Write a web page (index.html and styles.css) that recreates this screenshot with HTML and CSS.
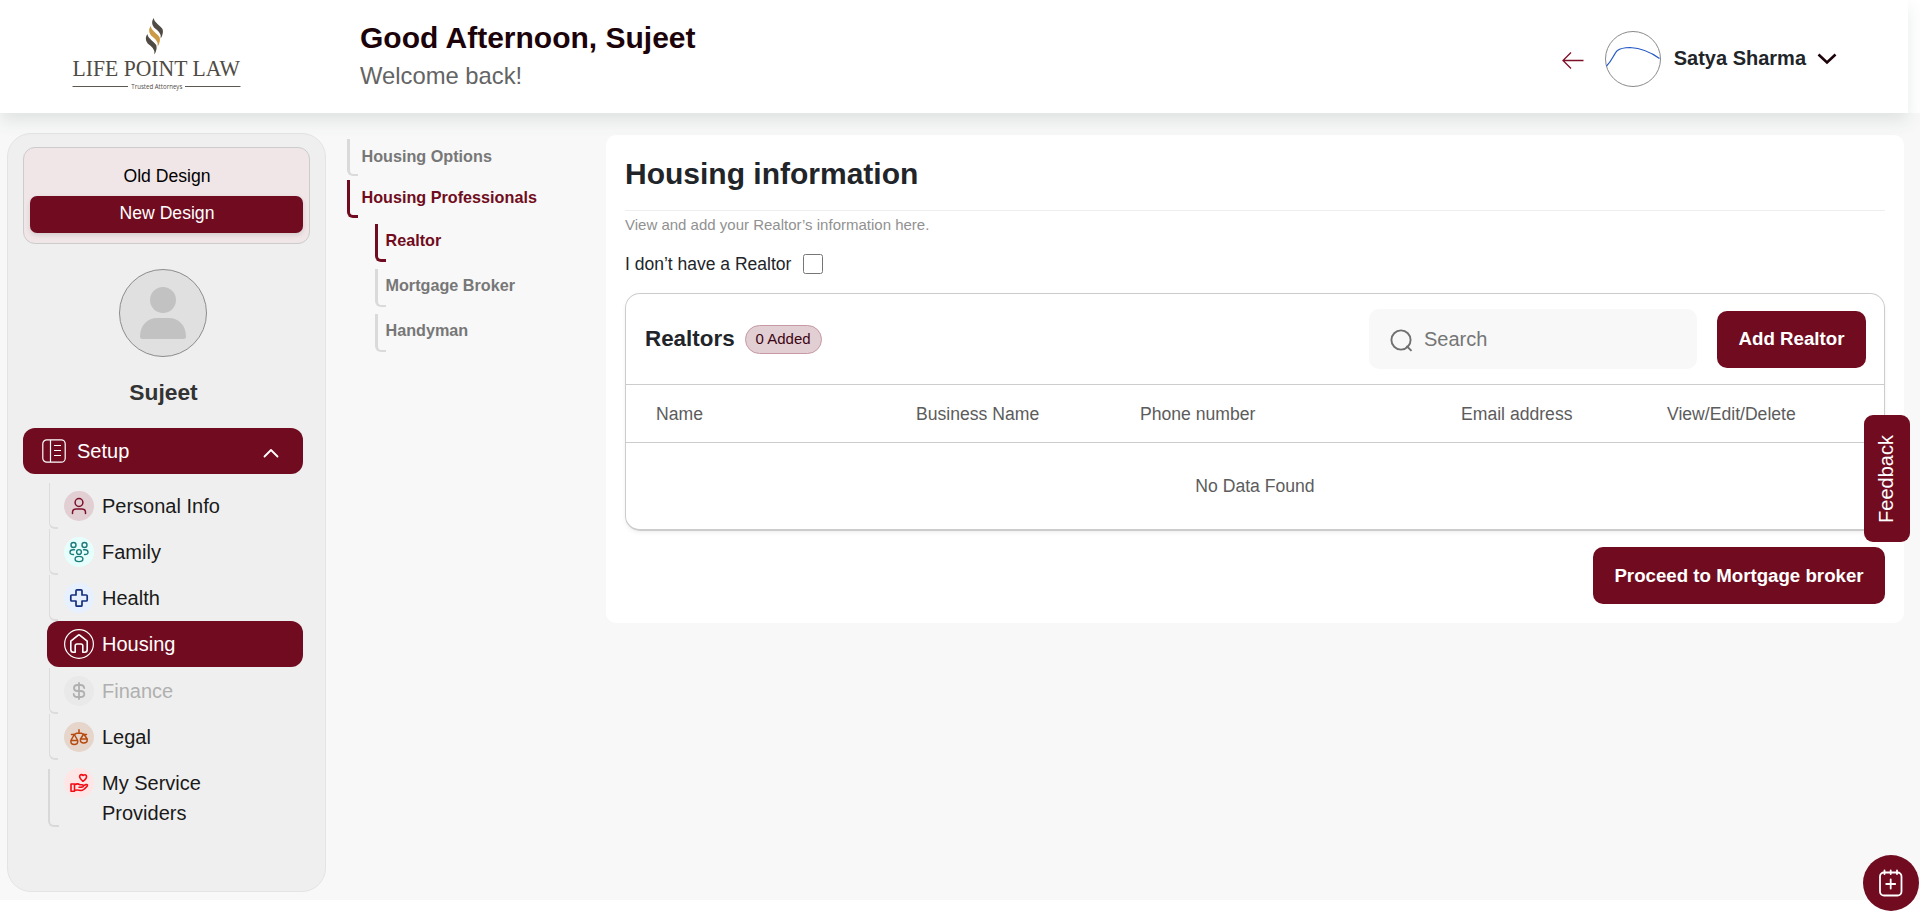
FILE: index.html
```html
<!DOCTYPE html>
<html lang="en">
<head>
<meta charset="utf-8">
<title>Housing information</title>
<link rel="stylesheet" href="styles.css">
</head>
<body>
<header class="topbar">
  <svg class="logo" width="172" height="76" viewBox="0 0 172 76">
    <path fill="#4f4b44" d="M81.500 1Q82 4 85.500 7T90.500 12Q92 16 88.700 21.500 89.300 17.500 87 15T82 10.500Q78.500 6.500 81.500 1z"/>
    <path fill="#cb9a45" d="M78.500 9Q79 12 82.500 15T87.500 20Q89 24 85.700 29.500 86.300 25.500 84 23T79 18.500Q75.500 14.500 78.500 9z"/>
    <path fill="#4f4b44" d="M75.200 17Q75.700 20 79.200 23T84.200 28Q85.700 32 82.400 37.500 83 33.500 80.700 31T75.700 26.500Q72.200 22.500 75.200 17z"/>
    <text class="logo-name" x=".5" y="59" textLength="167.500" lengthAdjust="spacingAndGlyphs">LIFE POINT LAW</text>
    <path stroke="#5c5850" d="M.500 69.500h55.500M113 69.500h55.500"/>
    <text class="logo-tag" x="59.300" y="71.700" textLength="51" lengthAdjust="spacingAndGlyphs">Trusted Attorneys</text>
  </svg>
  <div class="greeting">
    <h2 class="greeting-title">Good Afternoon, Sujeet</h2>
    <p class="greeting-sub">Welcome back!</p>
  </div>
  <div class="account">
    <svg class="back" width="23" height="18" viewBox="0 0 23 18" fill="none" stroke="#7c1029" stroke-width="1.300"><path d="M22.500 9.500H2M10 1.500L2 9.500 10 17.500"/></svg>
    <svg class="signature" width="56" height="56" viewBox="0 0 56 56" fill="none"><circle cx="28" cy="28" r="27.500" stroke="#8a8a8a"/><path stroke="#2258c4" stroke-width="1.200" d="M1.500 35Q5 31.500 8 26T12.500 19.500Q16 16.800 25 16.500 41 17.500 54.500 27.500"/></svg>
    <span class="account-name">Satya Sharma</span>
    <svg class="caret" width="20" height="12" viewBox="0 0 20 12" fill="none" stroke="#1c0309" stroke-width="2.600"><path d="M1.500 1.500L10 9.500 18.500 1.500"/></svg>
  </div>
</header>

<div class="page">
  <aside class="sidebar">
    <div class="design-toggle">
      <div class="design-option">Old Design</div>
      <div class="design-option design-option-active">New Design</div>
    </div>
    <svg class="avatar" width="88" height="88" viewBox="0 0 88 88"><circle cx="44" cy="44" r="43.500" fill="#e0e0e0" stroke="#8c8c8c"/><circle cx="44" cy="31" r="13" fill="#c2c2c2"/><path fill="#c2c2c2" d="M21 67.500C21 56 29 49 38 49H50C59 49 67 56 67 67.500Q67 70 64.500 70H23.500Q21 70 21 67.500Z"/></svg>
    <div class="profile-name">Sujeet</div>
    <div class="setup">
      <svg width="24" height="24" viewBox="0 0 24 24" fill="none" stroke="#fff" stroke-width="1.200"><rect x=".8" y=".8" width="22.400" height="22.400" rx="4"/><path d="M8.500 1v22M12 6.500h7M12 11.500h7M12 16.500h7"/></svg>
      <span class="setup-label">Setup</span>
      <svg width="16" height="10" viewBox="0 0 16 10" fill="none" stroke="#fff" stroke-width="1.800" stroke-linecap="round" stroke-linejoin="round"><path d="M1.500 8.500L8 2l6.500 6.500"/></svg>
    </div>
    <nav class="menu">
      <a class="menu-item"><svg class="menu-icon" width="30" height="30" viewBox="0 0 30 30" fill="none"><circle cx="15" cy="15" r="15" fill="#e2cfd4"/><g stroke="#7c1029" stroke-width="1.500" stroke-linecap="round"><circle cx="15" cy="11.500" r="3.900"/><path d="M8.500 22.500v-1q0-3.500 3.500-3.500h6q3.500 0 3.500 3.500v1"/></g></svg><span>Personal Info</span></a>
      <a class="menu-item"><svg class="menu-icon" width="30" height="30" viewBox="0 0 30 30" fill="none"><circle cx="15" cy="15" r="15" fill="#e6fffc"/><g stroke="#1c7a7a" stroke-width="1.400" stroke-linecap="round"><circle cx="9.500" cy="8" r="2.500"/><circle cx="20.500" cy="8" r="2.500"/><circle cx="15" cy="15" r="2.400"/><ellipse cx="15" cy="22" rx="3.900" ry="2.600"/><path d="M10.500 12.700H9q-3 0-3 2.500T9.500 17.500M19.500 12.700H21q3 0 3 2.500T20.500 17.500"/></g></svg><span>Family</span></a>
      <a class="menu-item"><svg class="menu-icon" width="30" height="30" viewBox="0 0 30 30" fill="none"><circle cx="15" cy="15" r="15" fill="#e6f0ff"/><path stroke="#152f7d" stroke-width="1.700" stroke-linejoin="round" d="M13 6.800h4q1 0 1 1v4.200h4.200q1 0 1 1v4q0 1-1 1H18v4.200q0 1-1 1h-4q-1 0-1-1V18H7.800q-1 0-1-1v-4q0-1 1-1H12V7.800q0-1 1-1z"/></svg><span>Health</span></a>
      <a class="menu-item menu-item-active"><svg class="menu-icon" width="30" height="30" viewBox="0 0 30 30" fill="none" stroke="#fff"><circle cx="15" cy="15" r="14.400" stroke-width="1.200"/><path stroke-width="1.600" stroke-linejoin="round" stroke-linecap="round" d="M6.800 12.200L14 6.300q1-.8 2 0L23.200 12.200V20.500q0 2.800-2.500 2.800H18.800V16.800q0-1.800-1.800-1.800H13q-1.800 0-1.800 1.800V23.300H9.300Q6.800 23.300 6.800 20.500z"/></svg><span>Housing</span></a>
      <a class="menu-item menu-item-disabled"><svg class="menu-icon" width="30" height="30" viewBox="0 0 30 30" fill="none"><circle cx="15" cy="15" r="15" fill="#e9e9e9"/><path stroke="#b0b0b0" stroke-width="1.800" stroke-linecap="round" d="M15 7v16M20.200 12Q20 9 16.500 9h-3Q10 9 10 12t3.500 3h3Q20.300 15 20.300 18t-3.800 3h-3Q9.700 21 9.700 18"/></svg><span>Finance</span></a>
      <a class="menu-item"><svg class="menu-icon" width="30" height="30" viewBox="0 0 30 30" fill="none"><circle cx="15" cy="15" r="15" fill="#e6d5ca"/><g stroke="#b74a10" stroke-width="1.500" stroke-linecap="round" stroke-linejoin="round"><path d="M15 7.800v3.400M7.500 12.500Q11 12.800 12.500 11.200h5Q19 12.800 22.500 12.500M10.300 12.500L6.900 18.500h6.800L10.300 12.500M19.700 12L16.500 17h6.700L19.700 12M6.900 18.500v1q0 3 3.400 3t3.400-3v-1M16.400 17v1q0 3 3.400 3t3.400-3v-1"/></g></svg><span>Legal</span></a>
      <a class="menu-item menu-item-tall"><svg class="menu-icon" width="30" height="30" viewBox="0 0 30 30" fill="none"><circle cx="15" cy="15" r="15" fill="#ffe6e6"/><g stroke="#f30d16" stroke-width="1.600" stroke-linecap="round" stroke-linejoin="round"><path d="M19 13.300Q14.500 9.500 16 7.300 17.500 5.800 19 7.500 21 6 22.300 7.600 23.500 10 19 13.300zM7 16h3.500v7.200H7zM10.500 16.800q3-1.800 5.500 0h2q1.800.3 1.300 1.600-.4.900-4.300.8M19.300 17.800l2.700-1.300q2-.3 1.300 1.500-3.800 4.500-6.300 4.500-3.500-1-6.500-.2"/></g></svg><span>My Service Providers</span></a>
    </nav>
  </aside>

  <nav class="subnav">
    <a class="subnav-item">Housing Options</a>
    <a class="subnav-item subnav-item-active">Housing Professionals</a>
    <div class="subnav-children">
      <a class="subnav-item subnav-item-active">Realtor</a>
      <a class="subnav-item">Mortgage Broker</a>
      <a class="subnav-item">Handyman</a>
    </div>
  </nav>

  <main class="card">
    <h1 class="card-title">Housing information</h1>
    <p class="card-hint">View and add your Realtor’s information here.</p>
    <label class="no-realtor">I don’t have a Realtor <input class="checkbox" type="checkbox"></label>
    <section class="table">
      <div class="table-bar">
        <h2 class="table-title">Realtors</h2>
        <span class="badge">0 Added</span>
        <div class="search">
          <svg width="23" height="23" viewBox="0 0 23 23" fill="none" stroke="#707070" stroke-width="1.900"><circle cx="11" cy="11" r="9.600"/><path d="M16.500 16.800l5 5"/></svg>
          <span>Search</span>
        </div>
        <button class="button button-add">Add Realtor</button>
      </div>
      <div class="table-head">
        <span>Name</span><span>Business Name</span><span>Phone number</span><span>Email address</span><span>View/Edit/Delete</span>
      </div>
      <div class="table-empty">No Data Found</div>
    </section>
    <button class="button button-next">Proceed to Mortgage broker</button>
  </main>
</div>

<div class="feedback"><span class="feedback-text">Feedback</span></div>
<div class="fab">
  <svg width="26" height="28" viewBox="0 0 26 28" fill="none" stroke="#fff" stroke-width="1.800" stroke-linecap="round"><rect x="2" y="3.500" width="21.500" height="23" rx="4"/><path d="M6.500 1.500v3.500M12.700 1.500v3.500M19 1.500v3.500M12.700 10.500v9M8.200 15h9"/></svg>
</div>
</body>
</html>
```

FILE: styles.css
```css
*, *::before { box-sizing: border-box; }
body {
  margin: 0;
  height: 912px;
  overflow: hidden;
  background: #fff;
  color: #212529;
  font-family: "Liberation Sans", Arial, sans-serif;
}
h1, h2, p { margin: 0; }
svg { display: block; flex: none; }

/* Header */
.topbar {
  position: relative;
  z-index: 1;
  display: flex;
  width: 1908px;
  height: 113px;
  padding-left: 72px;
  background: #fff;
  box-shadow: 0 8px 16px rgba(60, 80, 80, .12);
}
.logo { margin-top: 17px; overflow: visible; }
.logo-name { font: 23.5px "Liberation Serif", serif; fill: #4f4b44; }
.logo-tag { font: 6.8px "Open Sans", sans-serif; fill: #4f4b44; }
.greeting { margin-left: 116px; padding-top: 20px; }
.greeting-title { font-size: 30px; line-height: 36px; color: #1c0309; }
.greeting-sub { margin-top: 2px; font-size: 23.8px; line-height: 36px; color: #646464; }
.account { display: flex; align-items: center; height: 118px; margin-left: auto; padding-right: 71px; }
.back { margin: 2px 21px 0 0; }
.account-name { margin: 0 11px 2px 13px; font-size: 20px; font-weight: bold; }

/* Page columns */
.page { display: flex; align-items: flex-start; height: 787px; padding: 20px 0 0 7px; background: #f8f8f8; }

.sidebar {
  width: 319px;
  height: 759px;
  padding: 13px 15px;
  border: 1px solid #e4e4e4;
  border-radius: 24px;
  background: #efefef;
}
.design-toggle {
  width: 287px;
  height: 97px;
  padding: 10px 6px;
  border: 1px solid #ccc;
  border-radius: 12px;
  background: #f0e6e7;
  color: #000;
  font-size: 17.6px;
  text-align: center;
}
.design-option { height: 38px; padding-left: 1px; line-height: 36px; border-radius: 7px; }
.design-option-active { height: 37px; line-height: 34px; background: #710c20; color: #fff; box-shadow: 0 2px 5px rgba(0, 0, 0, .12); }
.avatar { margin: 25px 0 0 96px; }
.profile-name { width: 281px; margin-top: 20px; font-size: 22.8px; line-height: 31px; font-weight: bold; text-align: center; color: #333; }
.setup {
  display: flex;
  align-items: center;
  width: 280px;
  height: 46px;
  margin-top: 20px;
  padding: 0 24px 0 19px;
  border-radius: 12px;
  background: #710c20;
  color: #fff;
  font-size: 20px;
}
.setup-label { flex: 1; margin-left: 11px; }
.setup svg:last-child { margin-top: 4px; }

.menu { margin: 9px 0 0 24px; }
.menu-item {
  position: relative;
  display: flex;
  width: 256px;
  height: 46px;
  padding: 8px 60px 8px 17px;
  gap: 8px;
  border-radius: 12px;
  color: #1a1a1a;
  font-size: 20px;
  line-height: 30px;
}
.menu-item::before {
  content: "";
  position: absolute;
  left: 2px;
  top: 0;
  width: 9px;
  height: 46px;
  border: solid #dcdcdc;
  border-width: 0 0 2px 1px;
  border-bottom-left-radius: 6px;
}
.menu-item-active { background: #710c20; color: #fff; }
.menu-item-active::before { display: none; }
.menu-item-disabled { margin-top: 1px; color: #b0b0b0; }
.menu-item-tall { height: 76px; }
.menu-item-tall::before { left: 1px; top: 9px; width: 11px; height: 58px; border-width: 0 0 2px 2px; border-color: #d8d8d8; }

/* Section navigation */
.subnav { width: 259px; margin-left: 21px; padding-top: 6px; }
.subnav-item {
  position: relative;
  display: block;
  height: 41px;
  padding-left: 14.5px;
  color: #777;
  font-size: 16.2px;
  line-height: 35px;
  font-weight: bold;
}
.subnav-item::before {
  content: "";
  position: absolute;
  left: 0;
  top: 0;
  width: 11px;
  height: 37px;
  border: solid #dadada;
  border-width: 0 0 2px 3px;
  border-bottom-left-radius: 6px;
}
.subnav-item-active { color: #710c20; }
.subnav-item-active::before { height: 38px; border-color: #710c20; border-bottom-width: 3px; }
.subnav-children { margin: 3px 0 0 28px; }
.subnav-children .subnav-item { height: 45px; padding-left: 10.5px; line-height: 33px; }
.subnav-children .subnav-item::before { height: 38px; }

/* Main card */
.card { width: 1298px; height: 488px; margin-top: 2px; padding: 20px 19px 0; border-radius: 10px; background: #fff; }
.card-title { height: 56px; border-bottom: 1px solid #eee; font-size: 30px; line-height: 37px; }
.card-hint { margin-top: 3px; color: #919191; font-size: 15px; line-height: 22px; }
.no-realtor { display: flex; align-items: center; height: 22px; margin-top: 17px; font-size: 17.5px; }
.checkbox { width: 20px; height: 20px; margin: -1px 0 0 12px; }
.table {
  height: 238px;
  margin-top: 18px;
  border: 1px solid #ccc;
  border-bottom-width: 2px;
  border-radius: 15px;
  box-shadow: 0 2px 4px rgba(0, 0, 0, .06);
}
.table-bar { display: flex; align-items: center; height: 91px; padding: 0 18px 0 19px; border-bottom: 1px solid #ccc; }
.table-title { font-size: 22.4px; }
.badge {
  width: 77px;
  height: 29px;
  margin-left: 10px;
  border: 1px solid #c799a4;
  border-radius: 15px;
  background: #e2cfd4;
  color: #3d0612;
  font-size: 15px;
  line-height: 26px;
  text-align: center;
}
.search {
  display: flex;
  align-items: center;
  gap: 11px;
  width: 328px;
  height: 60px;
  margin-left: auto;
  padding-left: 21px;
  border-radius: 10px;
  background: #f8f8f8;
  color: #757575;
  font-size: 20px;
}
.search svg { margin-top: 3px; }
.button {
  height: 57px;
  padding: 0;
  border: 0;
  border-radius: 10px;
  background: #710c20;
  color: #fff;
  font: bold 18.7px "Liberation Sans", Arial, sans-serif;
}
.button-add { width: 149px; margin-left: 20px; padding-bottom: 1px; }
.table-head {
  display: grid;
  grid-template-columns: 260px 224px 321px 206px 1fr;
  height: 58px;
  padding-left: 30px;
  border-bottom: 1px solid #ccc;
  color: #5c5c5c;
  font-size: 17.6px;
  line-height: 58px;
}
.table-empty { color: #5c5c5c; font-size: 17.6px; line-height: 86px; text-align: center; }
.button-next { display: block; width: 292px; margin: 16px 0 0 auto; }

/* Floating controls */
.feedback {
  position: absolute;
  z-index: 2;
  left: 1864px;
  top: 415px;
  display: flex;
  align-items: center;
  justify-content: center;
  width: 46px;
  height: 127px;
  border-radius: 9px;
  background: #710c20;
  color: #fff;
}
.feedback-text { font-size: 20px; line-height: 44px; margin-right: 2px; transform: rotate(-90deg); }
.fab {
  position: absolute;
  z-index: 2;
  left: 1863px;
  top: 855px;
  display: flex;
  align-items: center;
  justify-content: center;
  width: 56px;
  height: 56px;
  border-radius: 50%;
  background: #710c20;
}
```
